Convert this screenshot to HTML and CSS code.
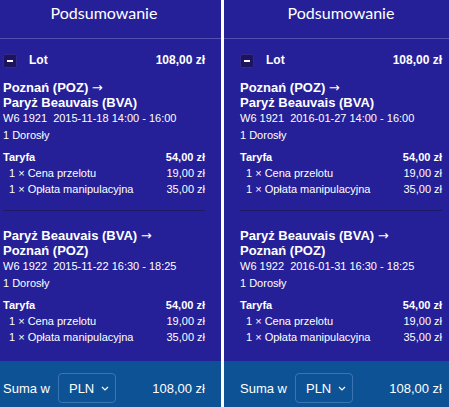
FILE: index.html
```html
<!DOCTYPE html>
<html lang="pl">
<head>
<meta charset="utf-8">
<title>Podsumowanie</title>
<link rel="stylesheet" href="styles.css">
</head>
<body>
<div class="panels">
  <section class="summary">
    <header class="summary-title">Podsumowanie</header>
    <div class="summary-body">
      <div class="group-row">
        <span class="toggle"><span class="toggle-bar"></span></span>
        <span class="group-name">Lot</span>
        <span class="group-price">108,00 zł</span>
      </div>

      <div class="leg">
        <div class="route">Poznań (POZ) <span class="arrow">→</span><br>Paryż Beauvais (BVA)</div>
        <div class="flight">W6 1921  2015-11-18 14:00 - 16:00</div>
        <div class="pax">1 Dorosły</div>
        <div class="fare-row fare-total"><span>Taryfa</span><span>54,00 zł</span></div>
        <div class="fare-row fare-item"><span>1 × Cena przelotu</span><span>19,00 zł</span></div>
        <div class="fare-row fare-item"><span>1 × Opłata manipulacyjna</span><span>35,00 zł</span></div>
      </div>

      <hr class="leg-sep">

      <div class="leg">
        <div class="route">Paryż Beauvais (BVA) <span class="arrow">→</span><br>Poznań (POZ)</div>
        <div class="flight">W6 1922  2015-11-22 16:30 - 18:25</div>
        <div class="pax">1 Dorosły</div>
        <div class="fare-row fare-total"><span>Taryfa</span><span>54,00 zł</span></div>
        <div class="fare-row fare-item"><span>1 × Cena przelotu</span><span>19,00 zł</span></div>
        <div class="fare-row fare-item"><span>1 × Opłata manipulacyjna</span><span>35,00 zł</span></div>
      </div>
    </div>
    <footer class="summary-total">
      <span class="total-label">Suma w</span>
      <span class="currency">PLN <svg class="chev" width="8" height="5" viewBox="0 0 8 5"><polyline points="1,1 4,4 7,1" fill="none" stroke="#fff" stroke-width="1.2"/></svg></span>
      <span class="total-price">108,00 zł</span>
    </footer>
  </section>

  <section class="summary">
    <header class="summary-title">Podsumowanie</header>
    <div class="summary-body">
      <div class="group-row">
        <span class="toggle"><span class="toggle-bar"></span></span>
        <span class="group-name">Lot</span>
        <span class="group-price">108,00 zł</span>
      </div>

      <div class="leg">
        <div class="route">Poznań (POZ) <span class="arrow">→</span><br>Paryż Beauvais (BVA)</div>
        <div class="flight">W6 1921  2016-01-27 14:00 - 16:00</div>
        <div class="pax">1 Dorosły</div>
        <div class="fare-row fare-total"><span>Taryfa</span><span>54,00 zł</span></div>
        <div class="fare-row fare-item"><span>1 × Cena przelotu</span><span>19,00 zł</span></div>
        <div class="fare-row fare-item"><span>1 × Opłata manipulacyjna</span><span>35,00 zł</span></div>
      </div>

      <hr class="leg-sep">

      <div class="leg">
        <div class="route">Paryż Beauvais (BVA) <span class="arrow">→</span><br>Poznań (POZ)</div>
        <div class="flight">W6 1922  2016-01-31 16:30 - 18:25</div>
        <div class="pax">1 Dorosły</div>
        <div class="fare-row fare-total"><span>Taryfa</span><span>54,00 zł</span></div>
        <div class="fare-row fare-item"><span>1 × Cena przelotu</span><span>19,00 zł</span></div>
        <div class="fare-row fare-item"><span>1 × Opłata manipulacyjna</span><span>35,00 zł</span></div>
      </div>
    </div>
    <footer class="summary-total">
      <span class="total-label">Suma w</span>
      <span class="currency">PLN <svg class="chev" width="8" height="5" viewBox="0 0 8 5"><polyline points="1,1 4,4 7,1" fill="none" stroke="#fff" stroke-width="1.2"/></svg></span>
      <span class="total-price">108,00 zł</span>
    </footer>
  </section>
</div>
</body>
</html>
```

FILE: styles.css
```css
html, body {
  margin: 0;
  padding: 0;
  background: #fff;
}

body {
  width: 449px;
  height: 407px;
  overflow: hidden;
  font-family: "Liberation Sans", Arial, sans-serif;
  color: #fff;
}

.panels {
  display: flex;
  gap: 3px;
  margin-left: -13px;
}

.summary {
  flex: 0 0 234px;
  width: 234px;
  background: #251f98;
  display: flex;
  flex-direction: column;
}

.summary-title {
  font-family: Lato, "Open Sans", sans-serif;
  font-size: 16px;
  line-height: 20px;
  text-align: center;
  padding: 3px 0 15px;
  border-bottom: 1px solid #5450b0;
}

.summary-body {
  padding: 15px 16px 16px;
}

.group-row {
  display: flex;
  align-items: flex-start;
  height: 14px;
  font-size: 12px;
  font-weight: bold;
  line-height: 13px;
}

.toggle {
  width: 14px;
  height: 14px;
  box-sizing: border-box;
  background: #1d145f;
  border: 1px solid #33298a;
  border-radius: 2px;
  display: flex;
  align-items: center;
  justify-content: center;
  margin-right: 12px;
}

.toggle-bar {
  width: 6px;
  height: 2px;
  background: #fff;
}

.group-name {
  flex: 1;
}

.leg {
  margin-top: 12px;
}

.route {
  font-size: 13px;
  font-weight: bold;
  line-height: 15px;
}

.arrow {
  font-family: "DejaVu Sans", sans-serif;
  font-weight: normal;
  font-size: 13px;
}

.flight {
  font-size: 11px;
  line-height: 17px;
  white-space: pre;
}

.pax {
  font-size: 11px;
  line-height: 16px;
}

.fare-row {
  display: flex;
  justify-content: space-between;
  font-size: 11px;
  line-height: 16px;
}

.fare-total {
  font-weight: bold;
  margin-top: 6px;
}

.fare-item {
  padding-left: 6px;
}

.leg-sep {
  border: 0;
  height: 1px;
  background: #1e1a66;
  margin: 13px 0 17px;
}

.leg-sep + .leg {
  margin-top: 0;
}

.summary-total {
  background: #0e5296;
  padding: 12px 16px 16px;
  display: flex;
  align-items: center;
  font-size: 13px;
}

.total-label {
  margin-right: 8px;
}

.currency {
  display: inline-flex;
  align-items: center;
  box-sizing: border-box;
  width: 58px;
  height: 30px;
  padding-left: 10px;
  border: 1px solid #3a74b2;
  border-radius: 4px;
}

.chev {
  margin-left: 7px;
}

.total-price {
  margin-left: auto;
}
```
